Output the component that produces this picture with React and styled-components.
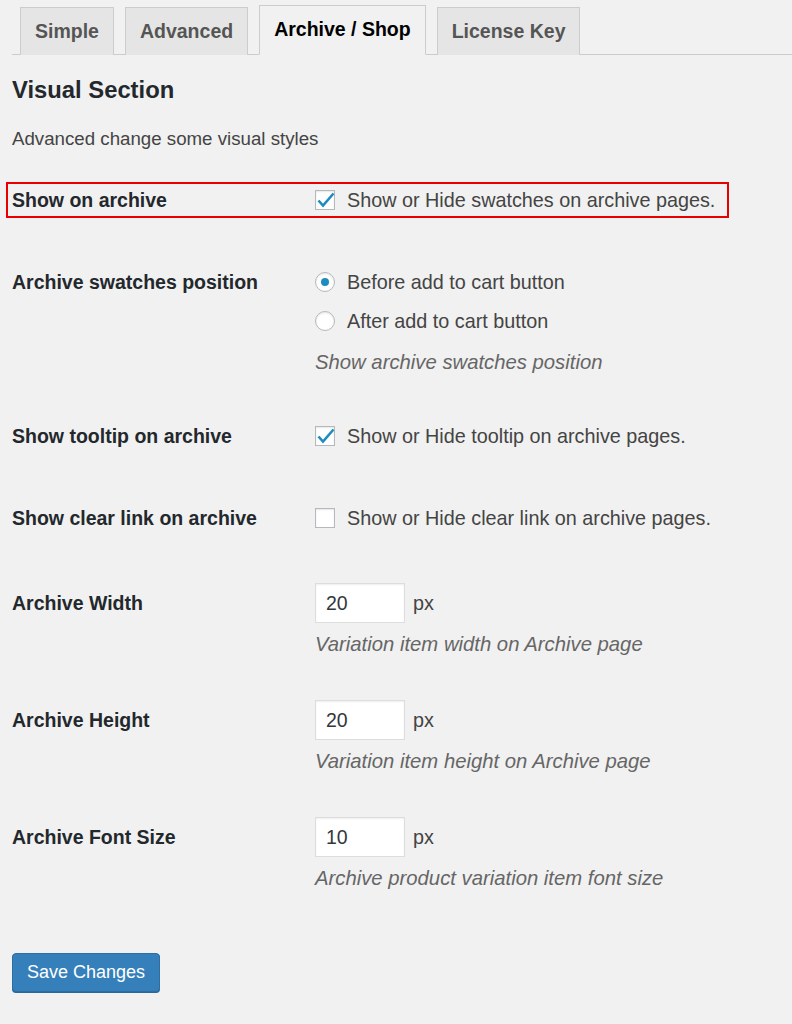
import React from 'react';
import styled, { createGlobalStyle } from 'styled-components';

const GlobalStyle = createGlobalStyle`
  body {
    margin: 0;
    background: #f1f1f1;
    font-family: "Liberation Sans", Arial, sans-serif;
    color: #444;
  }
`;

const Wrap = styled.div`
  padding: 5px 0 40px 12px;
`;

const TabBar = styled.nav`
  display: flex;
  align-items: flex-end;
  gap: 11px;
  padding-left: 8px;
  border-bottom: 1px solid #ccc;
`;

const Tab = styled.a`
  display: block;
  height: 47px;
  line-height: 47px;
  padding: 0 14px;
  margin-bottom: -1px;
  border: 1px solid #ccc;
  border-bottom: none;
  background: ${(p) => (p.$active ? '#f1f1f1' : '#e5e5e5')};
  color: ${(p) => (p.$active ? '#000' : '#555')};
  font-size: 19.5px;
  font-weight: 700;
  text-decoration: none;
  ${(p) => p.$active && 'height: 48px; border-bottom: 1px solid #f1f1f1;'}
`;

const Heading = styled.h2`
  margin: 20px 0 0;
  font-size: 23.8px;
  line-height: 30px;
  font-weight: 700;
  color: #23282d;
`;

const Intro = styled.p`
  margin: 21px 0 30px;
  font-size: 18.7px;
  line-height: 26px;
`;

const Row = styled.div`
  display: grid;
  grid-template-columns: 303px 1fr;
  align-items: start;
  padding: ${(p) => p.$top ?? 24}px 0 ${(p) => p.$bottom ?? 24}px;
  ${(p) =>
    p.$highlight &&
    `
    width: 711px;
    margin: 0 0 26px -6px;
    padding: 1px 4px;
    border: 2px solid #e80000;
  `}
`;

const Label = styled.div`
  font-size: 19.5px;
  font-weight: 700;
  color: #23282d;
  line-height: ${(p) => (p.$tall ? '40px' : '30px')};
`;

const Field = styled.div`
  display: flex;
  flex-direction: column;
  gap: 9px;
`;

const Line = styled.label`
  display: flex;
  align-items: center;
  gap: ${(p) => p.$gap ?? 12}px;
  min-height: 30px;
  font-size: 19.8px;
  color: #444;
`;

const Box = styled.span`
  position: relative;
  box-sizing: border-box;
  width: 20px;
  height: 20px;
  flex: none;
  display: flex;
  align-items: center;
  justify-content: center;
  background: #fff;
  border: 1px solid #b4b9be;
  border-radius: ${(p) => (p.$round ? '50%' : '0')};
  box-shadow: inset 0 1px 2px rgba(0, 0, 0, 0.1);
`;

const Tick = styled.svg`
  position: absolute;
  left: -1px;
  top: -1px;
  overflow: visible;
`;

const Dot = styled.span`
  width: 8px;
  height: 8px;
  border-radius: 50%;
  background: #1e8cbe;
`;

const Description = styled.p`
  margin: ${(p) => p.$offset ?? 1}px 0 0;
  font-size: 20.3px;
  line-height: 26px;
  font-style: italic;
  color: #666;
`;

const NumberInput = styled.input`
  box-sizing: border-box;
  width: 90px;
  height: 40px;
  padding: 0 10px;
  border: 1px solid #ddd;
  background: #fff;
  box-shadow: inset 0 1px 2px rgba(0, 0, 0, 0.07);
  font-family: inherit;
  font-size: 19.5px;
  color: #32373c;
  outline: none;
`;

const Unit = styled.span`
  font-size: 19.8px;
  color: #444;
`;

const SaveButton = styled.button`
  margin-top: 43px;
  height: 39px;
  padding: 0 14px;
  background: #3580bb;
  border: 1px solid #2b6fa5;
  border-radius: 4px;
  box-shadow: 0 1px 0 #2a679a;
  color: #fff;
  font-family: inherit;
  font-size: 18px;
  cursor: pointer;
`;

function Check({ checked }) {
  return (
    <Box>
      {checked && (
        <Tick width="20" height="20" viewBox="0 0 20 20">
          <polyline
            points="3.5,10.5 8,15.5 18.5,3.5"
            fill="none"
            stroke="#1e8cbe"
            strokeWidth="2.6"
            strokeLinejoin="miter"
          />
        </Tick>
      )}
    </Box>
  );
}

function Radio({ checked }) {
  return <Box $round>{checked && <Dot />}</Box>;
}

const sizeFields = [
  { label: 'Archive Width', value: '20', help: 'Variation item width on Archive page' },
  { label: 'Archive Height', value: '20', help: 'Variation item height on Archive page' },
  { label: 'Archive Font Size', value: '10', help: 'Archive product variation item font size' },
];

export default function App() {
  return (
    <Wrap>
      <GlobalStyle />
      <TabBar>
        <Tab>Simple</Tab>
        <Tab>Advanced</Tab>
        <Tab $active>Archive / Shop</Tab>
        <Tab>License Key</Tab>
      </TabBar>

      <Heading>Visual Section</Heading>
      <Intro>Advanced change some visual styles</Intro>

      <Row $highlight>
        <Label>Show on archive</Label>
        <Line>
          <Check checked />
          Show or Hide swatches on archive pages.
        </Line>
      </Row>

      <Row $top={23} $bottom={22}>
        <Label>Archive swatches position</Label>
        <Field>
          <Line>
            <Radio checked />
            Before add to cart button
          </Line>
          <Line>
            <Radio />
            After add to cart button
          </Line>
          <Description $offset={4}>Show archive swatches position</Description>
        </Field>
      </Row>

      <Row $bottom={28}>
        <Label>Show tooltip on archive</Label>
        <Line>
          <Check checked />
          Show or Hide tooltip on archive pages.
        </Line>
      </Row>

      <Row $bottom={26}>
        <Label>Show clear link on archive</Label>
        <Line>
          <Check />
          Show or Hide clear link on archive pages.
        </Line>
      </Row>

      {sizeFields.map((f) => (
        <Row key={f.label} $bottom={19}>
          <Label $tall>{f.label}</Label>
          <Field>
            <Line as="div" $gap={8}>
              <NumberInput defaultValue={f.value} />
              <Unit>px</Unit>
            </Line>
            <Description $offset={-1}>{f.help}</Description>
          </Field>
        </Row>
      ))}

      <SaveButton>Save Changes</SaveButton>
    </Wrap>
  );
}
